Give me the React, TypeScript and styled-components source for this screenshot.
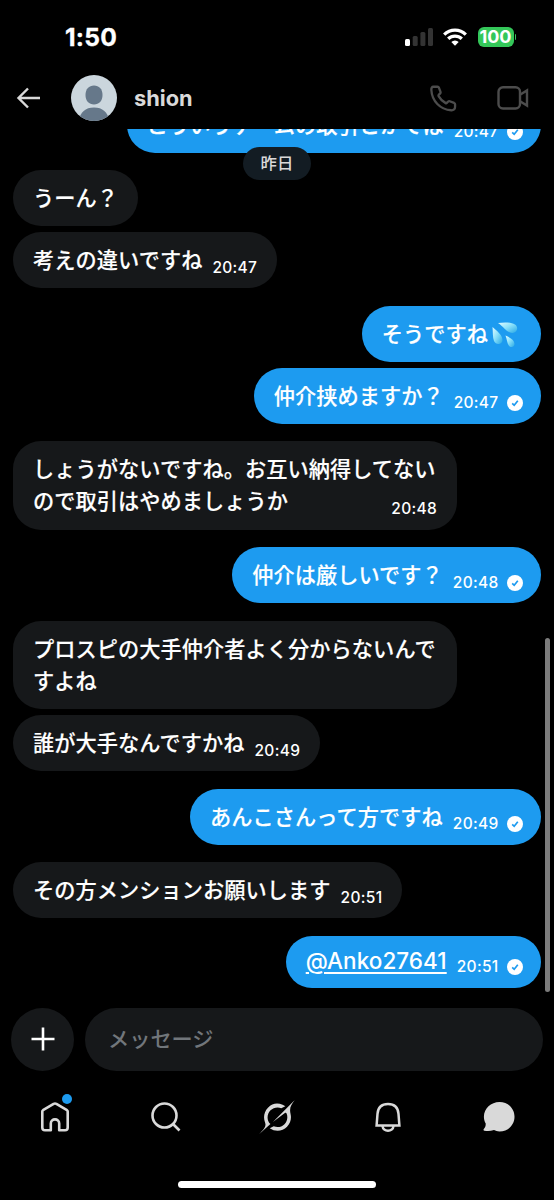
import React from "react";
import styled, { createGlobalStyle } from "styled-components";

const Global = createGlobalStyle`
  * { box-sizing: border-box; }
  body { margin: 0; background: #000; }
`;

const Screen = styled.div`
  position: relative;
  width: 554px;
  height: 1200px;
  overflow: hidden;
  background: #000;
  color: #fff;
  display: flex;
  flex-direction: column;
  font-family: Inter, "Noto Sans CJK JP", sans-serif;
`;

const StatusBar = styled.div`
  height: 68px;
  flex: none;
  display: flex;
  align-items: center;
  justify-content: space-between;
  padding: 6px 38px 0 65px;
`;

const Clock = styled.span`
  font-size: 24.6px;
  font-weight: 700;
  line-height: 30px;
  letter-spacing: 0.2px;
  -webkit-text-stroke: 0.3px #fff;
`;

const StatusIcons = styled.div`
  display: flex;
  align-items: center;
  gap: 10.5px;
`;

const Battery = styled.div`
  display: flex;
  align-items: center;
  gap: 1px;
`;

const BatteryBody = styled.span`
  width: 36px;
  height: 20px;
  border-radius: 6px;
  background: #34c759;
  font-size: 18px;
  font-weight: 700;
  line-height: 20px;
  text-align: center;
`;

const BatteryTip = styled.span`
  width: 1.5px;
  height: 6px;
  border-radius: 0 2px 2px 0;
  background: #34c759;
`;

const Header = styled.header`
  height: 61px;
  flex: none;
  display: flex;
  align-items: center;
  padding: 0 25px 1px 16px;
`;

const Avatar = styled.svg`
  margin-left: 30px;
`;

const Name = styled.h1`
  margin: 0 0 0 17px;
  flex: 1;
  font-size: 21.8px;
  font-weight: 700;
  line-height: 30px;
  color: #d9d9d9;
`;

const Calls = styled.div`
  display: flex;
  align-items: center;
  gap: 40px;
`;

const Chat = styled.main`
  position: relative;
  height: 879px;
  flex: none;
  overflow: hidden;
  display: flex;
  flex-direction: column;
  justify-content: flex-end;
  gap: 17.5px;
  padding: 0 13px 20.5px;
`;

const Group = styled.div<{ $own?: boolean }>`
  display: flex;
  flex-direction: column;
  align-items: ${(p) => (p.$own ? "flex-end" : "flex-start")};
  gap: 6px;
  flex: none;
`;

const Bubble = styled.div<{ $own?: boolean; $wide?: boolean; $short?: boolean }>`
  display: flex;
  flex-direction: column;
  width: ${(p) => (p.$wide ? "444px" : "auto")};
  padding: ${(p) => (p.$short ? "9px" : "11px")} ${(p) => (p.$own ? 18 : 20)}px
    ${(p) => (p.$short ? "11px" : p.$wide ? "13.5px" : "13px")} 20px;
  border-radius: 28px;
  background: ${(p) => (p.$own ? "#1d9bf0" : "#16181a")};
`;

const LastLine = styled.div`
  display: flex;
  align-items: flex-end;
  justify-content: space-between;
  gap: 10px;
`;

const Line = styled.span`
  display: block;
  font-family: "Noto Sans CJK JP", sans-serif;
  font-size: 21.2px;
  font-weight: 500;
  line-height: 32px;
  letter-spacing: 0.07px;
  white-space: nowrap;
  -webkit-text-stroke: 0.15px #fff;
`;

const Mention = styled.a`
  font-family: Inter, sans-serif;
  font-size: 22.5px;
  font-weight: 500;
  line-height: 32px;
  letter-spacing: 0.05px;
  color: #fff;
  text-decoration: underline;
  text-decoration-thickness: 2px;
  text-underline-offset: 3px;
`;

const Meta = styled.span<{ $raised?: boolean }>`
  display: flex;
  align-items: center;
  gap: 8.5px;
  height: 18px;
  margin-bottom: ${(p) => (p.$raised ? "1px" : "-1.5px")};
`;

const Time = styled.time`
  font-size: 15.5px;
  font-weight: 500;
  line-height: 18px;
  letter-spacing: 0.3px;
`;

const DatePill = styled.div`
  position: absolute;
  top: 18px;
  left: 243px;
  width: 68px;
  height: 33px;
  border-radius: 17px;
  background: #131c23;
  color: #d9d9d9;
  font-family: "Noto Sans CJK JP", sans-serif;
  font-size: 16.4px;
  font-weight: 500;
  line-height: 31px;
  text-align: center;
`;

const ScrollThumb = styled.div`
  position: absolute;
  right: 4px;
  top: 509px;
  width: 5px;
  height: 354px;
  border-radius: 3px;
  background: #7c7c7c;
`;

const Composer = styled.div`
  display: flex;
  flex: none;
  gap: 11px;
  padding: 0 11.5px 0 11px;
  height: 63px;
`;

const PlusButton = styled.button`
  width: 63px;
  height: 63px;
  border: 0;
  padding: 0 0 1px;
  border-radius: 50%;
  background: #16181a;
  display: grid;
  place-items: center;
`;

const Field = styled.div`
  flex: 1;
  border-radius: 32px;
  background: #16181a;
  padding-left: 23px;
  font-family: "Noto Sans CJK JP", sans-serif;
  font-size: 21.2px;
  font-weight: 500;
  line-height: 59px;
  color: #71767b;
`;

const Nav = styled.nav`
  display: grid;
  grid-template-columns: repeat(5, 1fr);
  height: 110px;
  flex: none;
`;

const NavItem = styled.div`
  position: relative;
  height: 91px;
  display: grid;
  place-items: center;
`;

const Dot = styled.span`
  position: absolute;
  left: 61.5px;
  top: 23px;
  width: 10px;
  height: 10px;
  border-radius: 50%;
  background: #1d9bf0;
`;

const HomeBar = styled.div`
  width: 198px;
  height: 7px;
  border-radius: 4px;
  background: #fff;
  align-self: center;
`;

const SweatIcon = styled.svg`
  vertical-align: -6px;
  margin: 0 5px 0 4px;
`;

const Check = () => (
  <svg width="16" height="16" viewBox="0 0 16 16">
    <circle cx="8" cy="8" r="8" fill="#fff" />
    <path d="M5.2 8.3l2 2 3.6-4.5" fill="none" stroke="#1d9bf0" strokeWidth="1.7" />
  </svg>
);

const Sweat = () => (
  <SweatIcon width="26" height="26" viewBox="0 0 26 26">
    <defs>
      <linearGradient id="drop" x1="0" y1="0" x2="1" y2="1">
        <stop offset="0" stopColor="#e4fbff" />
        <stop offset="0.45" stopColor="#8fe3fb" />
        <stop offset="1" stopColor="#27a9e6" />
      </linearGradient>
    </defs>
    <path d="M6 1C12 0 19 0 23 2.5C27 5 25 11 20.5 11C15 11 12 5 6 1Z" fill="url(#drop)" />
    <path d="M.5 5C5 9 10.5 13 10.5 18C10.5 22.5 4 23.5 2 19C.5 15.5 1 10 .5 5Z" fill="url(#drop)" />
    <path d="M13.5 13.5C18 15.5 22.5 18 22.5 22C22.5 25.5 18.5 26 16.8 23.5C15 21 15 17 13.5 13.5Z" fill="url(#drop)" />
  </SweatIcon>
);

type MessageProps = { own?: boolean; first?: string; time?: string; children: React.ReactNode };

const Message = ({ own, first, time, children }: MessageProps) => (
  <Bubble $own={own} $wide={!!first}>
    {first && <Line>{first}</Line>}
    <LastLine>
      <Line>{children}</Line>
      {time && (
        <Meta>
          <Time>{time}</Time>
          {own && <Check />}
        </Meta>
      )}
    </LastLine>
  </Bubble>
);

export default function App() {
  return (
    <Screen>
      <Global />
      <StatusBar>
        <Clock>1:50</Clock>
        <StatusIcons>
          <svg width="28" height="18" viewBox="0 0 28 18">
            <rect x="0" y="11" width="5" height="7" rx="1.5" fill="#fff" />
            <rect x="7.7" y="8" width="5" height="10" rx="1.5" fill="#333" />
            <rect x="15.4" y="4" width="5" height="14" rx="1.5" fill="#333" />
            <rect x="23" y="0" width="5" height="18" rx="1.5" fill="#333" />
          </svg>
          <svg width="24" height="18" viewBox="0 0 24 18">
            <g fill="none" stroke="#fff" strokeWidth="3.3">
              <path d="M1.2 6.6A15.5 15.5 0 0 1 22.8 6.6" />
              <path d="M5.2 10.8A9.8 9.8 0 0 1 18.8 10.8" />
            </g>
            <path d="M8.3 13.9A5.3 5.3 0 0 1 15.7 13.9L12 17.7Z" fill="#fff" />
          </svg>
          <Battery>
            <BatteryBody>100</BatteryBody>
            <BatteryTip />
          </Battery>
        </StatusIcons>
      </StatusBar>
      <Header>
        <svg width="25" height="22" viewBox="0 0 25 22" fill="none" stroke="#d9d9d9" strokeWidth="2.4">
          <path d="M24 11H3M12 1.5L2.5 11L12 20.5" />
        </svg>
        <Avatar width="46" height="46" viewBox="0 0 46 46">
          <defs>
            <clipPath id="face">
              <circle cx="23" cy="23" r="23" />
            </clipPath>
          </defs>
          <g clipPath="url(#face)">
            <rect width="46" height="46" fill="#cbd6dd" />
            <path d="M23 10.5c5 0 8.5 3.5 8.5 9.5c0 6-3.5 9.5-8.5 9.5s-8.5-3.5-8.5-9.5c0-6 3.5-9.5 8.5-9.5Z" fill="#66788a" />
            <path d="M8 46C9 37 14.5 32.5 23 32.5S37 37 38 46Z" fill="#66788a" />
          </g>
        </Avatar>
        <Name>shion</Name>
        <Calls>
          <svg width="27" height="27" viewBox="0 0 28 28" fill="none" stroke="#4c4c4c" strokeWidth="2.4" strokeLinejoin="round">
            <path d="M3.5 1.8H7.8C8.5 1.8 9 2.2 9.3 2.9L10.9 7.1C11.1 7.7 11 8.3 10.6 8.7L9 10.3C8.7 10.7 8.7 11.1 8.9 11.5C10.7 14.8 12.9 16.9 16.3 18.8C16.7 19 17.1 18.9 17.4 18.6L18.9 17.1C19.3 16.7 19.9 16.6 20.4 16.8L25 18.6C25.6 18.9 26 19.3 26 20V22.5C26 25 24.5 26.4 22 26.2C10.5 25.5 2 16.5 1.4 5.2C1.3 3.2 2 1.8 3.5 1.8Z" />
          </svg>
          <svg width="32" height="24" viewBox="0 0 32 24" fill="none" stroke="#4c4c4c" strokeWidth="2.4">
            <rect x="1.5" y="1.3" width="21.5" height="21.2" rx="4.5" />
            <path d="M23 8.8L30 4.5V19.5L23 15.2" />
          </svg>
        </Calls>
      </Header>
      <Chat>
        <Group $own>
          <Message own time="20:47">こういうゲームの取引とかでは</Message>
        </Group>
        <Group>
          <Message>うーん？</Message>
          <Message time="20:47">考えの違いですね</Message>
        </Group>
        <Group $own>
          <Message own>
            そうですね
            <Sweat />
          </Message>
          <Message own time="20:47">仲介挟めますか？</Message>
        </Group>
        <Group>
          <Message first="しょうがないですね。お互い納得してない" time="20:48">ので取引はやめましょうか</Message>
        </Group>
        <Group $own>
          <Message own time="20:48">仲介は厳しいです？</Message>
        </Group>
        <Group>
          <Message first="プロスピの大手仲介者よく分からないんで">すよね</Message>
          <Message time="20:49">誰が大手なんですかね</Message>
        </Group>
        <Group $own>
          <Message own time="20:49">あんこさんって方ですね</Message>
        </Group>
        <Group>
          <Message time="20:51">その方メンションお願いします</Message>
        </Group>
        <Group $own>
          <Bubble $own $short>
            <LastLine>
              <Mention>@Anko27641</Mention>
              <Meta $raised>
                <Time>20:51</Time>
                <Check />
              </Meta>
            </LastLine>
          </Bubble>
        </Group>
        <DatePill>昨日</DatePill>
        <ScrollThumb />
      </Chat>
      <Composer>
        <PlusButton aria-label="追加">
          <svg width="24" height="24" viewBox="0 0 24 24" stroke="#fff" strokeWidth="2.6">
            <path d="M12 .5V23.5M.5 12H23.5" />
          </svg>
        </PlusButton>
        <Field>メッセージ</Field>
      </Composer>
      <Nav>
        <NavItem>
          <svg width="30" height="30" viewBox="0 0 30 30" fill="none" stroke="#d9d9d9" strokeWidth="2.6" strokeLinejoin="round">
            <path d="M2.3 9.5Q2.3 8.7 3 8.2L13.6 1.9Q15 1.2 16.4 1.9L27 8.2Q27.7 8.7 27.7 9.5V25.5Q27.7 28.3 25 28.3H19.2V21.5C19.2 16 10.8 16 10.8 21.5V28.3H5Q2.3 28.3 2.3 25.5Z" />
          </svg>
          <Dot />
        </NavItem>
        <NavItem>
          <svg width="30" height="30" viewBox="0 0 30 30" fill="none" stroke="#d9d9d9" strokeWidth="2.6">
            <circle cx="13.5" cy="13.5" r="12" />
            <path d="M22 22L28.5 28.5" />
          </svg>
        </NavItem>
        <NavItem>
          <svg width="36" height="36" viewBox="0 0 24 24" fill="#d9d9d9">
            <path d="M9.27 15.29l7.978-5.897c.391-.29.95-.177 1.137.272.98 2.369.542 5.215-1.41 7.169-1.951 1.954-4.667 2.382-7.149 1.406l-2.711 1.257c3.889 2.661 8.611 2.003 11.562-.953 2.341-2.344 3.066-5.539 2.388-8.42l.006.007c-.983-4.232.242-5.924 2.75-9.383.06-.082.12-.164.179-.248l-3.301 3.305v-.01L9.267 15.292M7.623 16.723c-2.792-2.67-2.31-6.801.071-9.184 1.761-1.763 4.647-2.483 7.166-1.425l2.705-1.25a7.808 7.808 0 0 0-1.829-1A8.975 8.975 0 0 0 5.984 5.83c-2.533 2.536-3.33 6.436-1.962 9.764 1.022 2.487-.653 4.246-2.34 6.022-.599.63-1.199 1.259-1.682 1.925l7.62-6.815" />
          </svg>
        </NavItem>
        <NavItem>
          <svg width="28" height="30" viewBox="0 0 28 30" fill="none" stroke="#d9d9d9" strokeWidth="2.5">
            <path d="M2.6 23.5L3.5 11.8C4 5.5 8 2 14 2S24 5.5 24.5 11.8L25.4 23.5Z" />
            <path d="M8.5 23.8C9 30.3 19 30.3 19.5 23.8" />
          </svg>
        </NavItem>
        <NavItem>
          <svg width="32" height="30" viewBox="0 0 32 30">
            <path d="M16.5 0C25 0 31.5 6.4 31.5 14.8S25 29.5 16.5 29.5C14.3 29.5 12.7 29 11 28.1C7.8 29.2 4.5 29.3 1.5 28.8C.4 28.6.2 27.5 1 26.7C2.2 25.4 2.8 23.7 2.7 21.5C1.5 19.5.9 17.3.9 14.8C.9 6.4 8 0 16.5 0Z" fill="#d9d9d9" />
          </svg>
        </NavItem>
      </Nav>
      <HomeBar />
    </Screen>
  );
}
